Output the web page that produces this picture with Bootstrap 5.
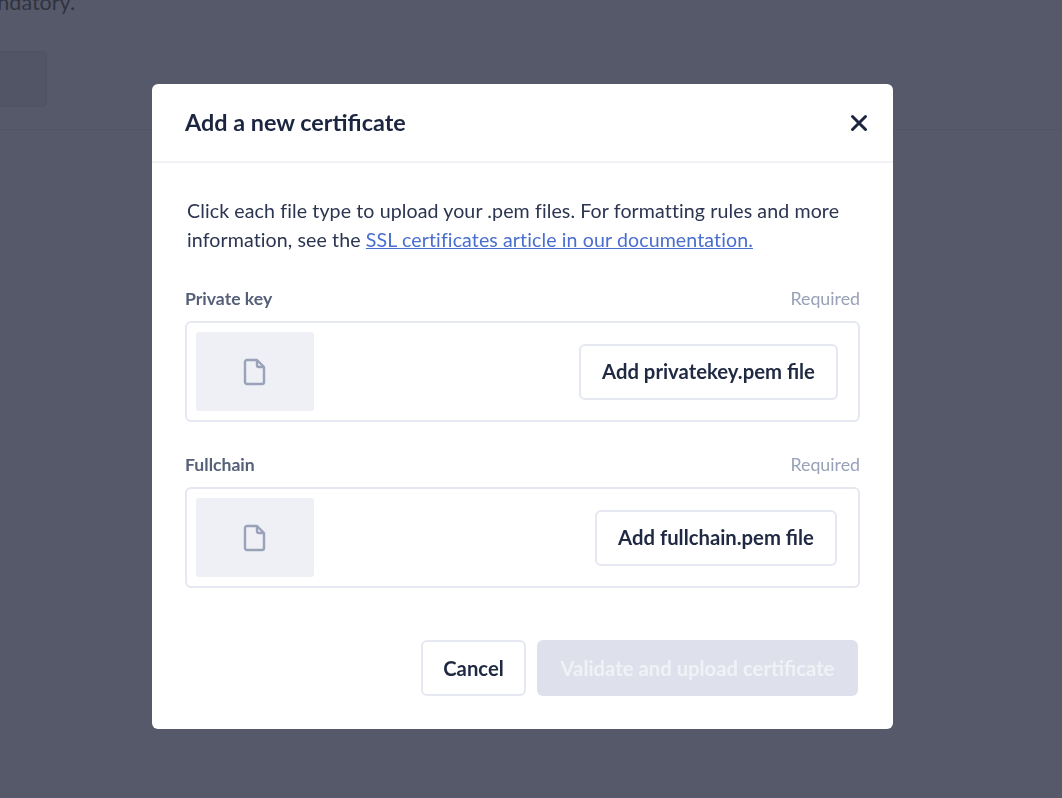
<!DOCTYPE html>
<html lang="en">
<head>
  <meta charset="UTF-8">
  <meta name="viewport" content="width=device-width, initial-scale=1">
  <title>Add a new certificate</title>
  <link href="https://cdn.jsdelivr.net/npm/bootstrap@5.3.0/dist/css/bootstrap.min.css" rel="stylesheet">
  <style>
    html, body {
      height: 100%;
      overflow: hidden;
    }
    body {
      background-color: #565969;
      font-family: Lato, "Noto Sans", sans-serif;
      color: #1f2942;
    }
    .page-behind {
      height: 130px;
      border-bottom: 1px solid #525565;
      overflow: hidden;
    }
    .behind-text {
      margin: -11px 0 0 -31px;
      font-size: 21.5px;
      line-height: 26px;
      color: #30333f;
      white-space: nowrap;
    }
    .behind-btn {
      width: 100px;
      height: 56px;
      margin: 36px 0 0 -53px;
      background: #525565;
      border: 1px solid #4f5262;
      border-radius: 5px;
    }
    .cert-modal {
      background: transparent;
    }
    .cert-dialog {
      width: 741px;
      max-width: 741px;
      margin: 84px 0 0 152px;
    }
    .cert-content {
      height: 645px;
      border: 0;
      border-radius: 6px;
    }
    .cert-head {
      height: 79px;
      padding: 0 24px 0 33px;
      border-bottom: 2px solid #f1f1f6;
    }
    .cert-title {
      font-size: 23.4px;
      font-weight: 700;
      color: #1c2540;
      margin: 0;
    }
    .close-x {
      width: 20px;
      height: 20px;
      background: none;
      border: 0;
      padding: 0;
      line-height: 0;
    }
    .cert-body {
      padding: 33px 33px 0;
    }
    .cert-intro {
      font-size: 19.6px;
      letter-spacing: .1px;
      line-height: 29px;
      margin: 0 0 34px 2px;
      color: #2b3450;
    }
    .cert-intro a {
      color: #4a6ed0;
    }
    .field-label {
      font-size: 17.6px;
      font-weight: 700;
      color: #566079;
    }
    .field-req {
      font-size: 17.8px;
      color: #98a1b7;
      margin-bottom: 2px;
    }
    .field-head {
      height: 22px;
      margin-bottom: 11px;
    }
    .file-box {
      height: 101px;
      border: 2px solid #e6e8f1;
      border-radius: 6px;
      padding: 10px 20px 10px 9px;
      margin-bottom: 32px;
    }
    .file-thumb {
      width: 118px;
      height: 79px;
      background: #eef0f5;
      border-radius: 3px;
    }
    .file-btn, .cancel-btn {
      height: 56px;
      background: #fff;
      border: 2px solid #e6e8f1;
      border-radius: 6px;
      font-size: 20.3px;
      font-weight: 700;
      color: #1f2942;
    }
    .file-btn-key {
      width: 259px;
    }
    .file-btn-chain {
      width: 242px;
      margin-right: 1px;
    }
    .cancel-btn {
      width: 105px;
    }
    .submit-btn {
      width: 321px;
      height: 56px;
      background: #dee0eb;
      border: 0;
      border-radius: 6px;
      font-size: 20.3px;
      font-weight: 700;
      color: #f1f2f7;
    }
    .cert-actions {
      gap: 11px;
      margin: 52px 2px 0 0;
    }
  </style>
</head>
<body>
  <div class="page-behind">
    <div class="behind-text">mandatory.</div>
    <div class="behind-btn"></div>
  </div>

  <div class="modal d-block cert-modal" tabindex="-1">
    <div class="modal-dialog cert-dialog">
      <div class="modal-content cert-content">
        <div class="d-flex align-items-center justify-content-between cert-head">
          <h5 class="cert-title">Add a new certificate</h5>
          <button type="button" class="close-x" aria-label="Close">
            <svg width="20" height="20" viewBox="0 0 20 20"><path d="M3.5 3.5l13 13M16.5 3.5l-13 13" stroke="#1c2540" stroke-width="3" stroke-linecap="round" fill="none"/></svg>
          </button>
        </div>
        <div class="cert-body">
          <p class="cert-intro">Click each file type to upload your .pem files. For formatting rules and more information, see the <a href="#">SSL certificates article in our documentation.</a></p>

          <div class="d-flex justify-content-between align-items-center field-head">
            <span class="field-label">Private key</span>
            <span class="field-req">Required</span>
          </div>
          <div class="d-flex align-items-center justify-content-between file-box">
            <div class="d-flex align-items-center justify-content-center file-thumb">
              <svg width="24" height="28" viewBox="0 0 24 28"><path d="M4 2h10l7 7v15a2 2 0 0 1-2 2H4a2 2 0 0 1-2-2V4a2 2 0 0 1 2-2zM14 2v5a2 2 0 0 0 2 2h5" stroke="#99a2b9" stroke-width="2.4" stroke-linejoin="round" fill="none"/></svg>
            </div>
            <button type="button" class="file-btn file-btn-key">Add privatekey.pem file</button>
          </div>

          <div class="d-flex justify-content-between align-items-center field-head">
            <span class="field-label">Fullchain</span>
            <span class="field-req">Required</span>
          </div>
          <div class="d-flex align-items-center justify-content-between file-box">
            <div class="d-flex align-items-center justify-content-center file-thumb">
              <svg width="24" height="28" viewBox="0 0 24 28"><path d="M4 2h10l7 7v15a2 2 0 0 1-2 2H4a2 2 0 0 1-2-2V4a2 2 0 0 1 2-2zM14 2v5a2 2 0 0 0 2 2h5" stroke="#99a2b9" stroke-width="2.4" stroke-linejoin="round" fill="none"/></svg>
            </div>
            <button type="button" class="file-btn file-btn-chain">Add fullchain.pem file</button>
          </div>

          <div class="d-flex justify-content-end cert-actions">
            <button type="button" class="cancel-btn">Cancel</button>
            <button type="button" class="submit-btn" disabled>Validate and upload certificate</button>
          </div>
        </div>
      </div>
    </div>
  </div>

  <script src="https://cdn.jsdelivr.net/npm/bootstrap@5.3.0/dist/js/bootstrap.bundle.min.js"></script>
</body>
</html>
